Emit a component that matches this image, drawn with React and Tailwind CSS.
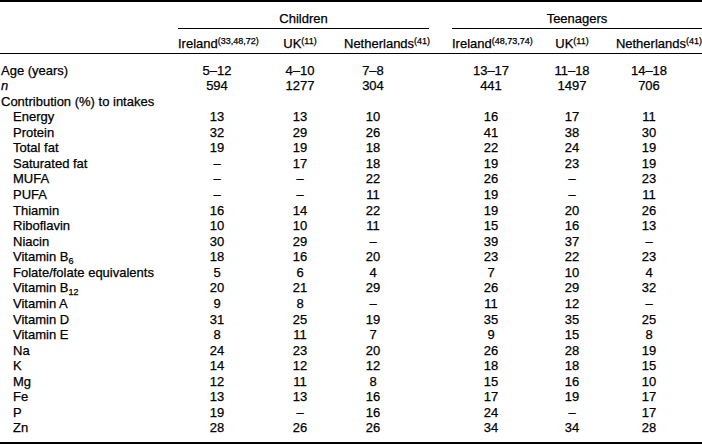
import React from "react";

const D = "–";

const rows = [
  { label: "Age (years)", vals: ["5–12", "4–10", "7–8", "13–17", "11–18", "14–18"] },
  { label: <i>n</i>, vals: ["594", "1277", "304", "441", "1497", "706"] },
  { label: "Contribution (%) to intakes", vals: null },
  { label: "Energy", sub: true, vals: ["13", "13", "10", "16", "17", "11"] },
  { label: "Protein", sub: true, vals: ["32", "29", "26", "41", "38", "30"] },
  { label: "Total fat", sub: true, vals: ["19", "19", "18", "22", "24", "19"] },
  { label: "Saturated fat", sub: true, vals: [D, "17", "18", "19", "23", "19"] },
  { label: "MUFA", sub: true, vals: [D, D, "22", "26", D, "23"] },
  { label: "PUFA", sub: true, vals: [D, D, "11", "19", D, "11"] },
  { label: "Thiamin", sub: true, vals: ["16", "14", "22", "19", "20", "26"] },
  { label: "Riboflavin", sub: true, vals: ["10", "10", "11", "15", "16", "13"] },
  { label: "Niacin", sub: true, vals: ["30", "29", D, "39", "37", D] },
  {
    label: (
      <>
        Vitamin B<sub className="text-[9px]">6</sub>
      </>
    ),
    sub: true,
    vals: ["18", "16", "20", "23", "22", "23"],
  },
  { label: "Folate/folate equivalents", sub: true, vals: ["5", "6", "4", "7", "10", "4"] },
  {
    label: (
      <>
        Vitamin B<sub className="text-[9px]">12</sub>
      </>
    ),
    sub: true,
    vals: ["20", "21", "29", "26", "29", "32"],
  },
  { label: "Vitamin A", sub: true, vals: ["9", "8", D, "11", "12", D] },
  { label: "Vitamin D", sub: true, vals: ["31", "25", "19", "35", "35", "25"] },
  { label: "Vitamin E", sub: true, vals: ["8", "11", "7", "9", "15", "8"] },
  { label: "Na", sub: true, vals: ["24", "23", "20", "26", "28", "19"] },
  { label: "K", sub: true, vals: ["14", "12", "12", "18", "18", "15"] },
  { label: "Mg", sub: true, vals: ["12", "11", "8", "15", "16", "10"] },
  { label: "Fe", sub: true, vals: ["13", "13", "16", "17", "19", "17"] },
  { label: "P", sub: true, vals: ["19", D, "16", "24", D, "17"] },
  { label: "Zn", sub: true, vals: ["28", "26", "26", "34", "34", "28"] },
];

// value columns; the empty gap column sits between the third and fourth
const valClass = [
  "text-center",
  "text-center",
  "text-center pr-[27px]",
  "text-center",
  "text-center",
  "text-center pr-[18px]",
];

const Sup = ({ children }) => <sup className="text-[9px]">{children}</sup>;

export default function App() {
  return (
    <div
      className="w-[702px] h-[445px] bg-white text-black text-[13px] [-webkit-text-stroke:0.25px_black]"
      style={{ fontFamily: '"Liberation Sans", Arial, sans-serif' }}
    >
      <div className="border-t-2 border-b-2 border-black pb-[6px]">
        {/* Group header */}
        <div className="grid grid-cols-[178px_251px_23px_250px] leading-[15px]">
          <div />
          <div className="text-center pt-[9px] pb-[2px] border-b border-black">Children</div>
          <div />
          <div className="text-center pt-[9px] pb-[2px] border-b border-black">Teenagers</div>
        </div>

        {/* Country header */}
        <div className="grid grid-cols-[178px_78px_88px_85px_23px_78px_84px_88px] leading-[15px] border-b border-black whitespace-nowrap">
          <div />
          <div className="text-center pt-[7px] pb-[2px]">
            Ireland<Sup>(33,48,72)</Sup>
          </div>
          <div className="text-center pt-[7px] pb-[2px]">
            UK<Sup>(11)</Sup>
          </div>
          <div className="text-center pt-[7px] pb-[2px]">
            Netherlands<Sup>(41)</Sup>
          </div>
          <div />
          <div className="text-center pt-[7px] pb-[2px]">
            Ireland<Sup>(48,73,74)</Sup>
          </div>
          <div className="text-center pt-[7px] pb-[2px]">
            UK<Sup>(11)</Sup>
          </div>
          <div className="text-right pt-[7px] pb-[2px]">
            Netherlands<Sup>(41)</Sup>
          </div>
        </div>

        {/* Body */}
        <div className="pt-[8.5px]">
          {rows.map((r, i) => (
            <div
              key={i}
              className="grid grid-cols-[178px_78px_88px_85px_23px_78px_84px_88px] leading-[15.57px] h-[15.57px] whitespace-nowrap"
            >
              <div className={r.sub ? "pl-[13px]" : "pl-px"}>{r.label}</div>
              {r.vals ? (
                <>
                  <div className={valClass[0]}>{r.vals[0]}</div>
                  <div className={valClass[1]}>{r.vals[1]}</div>
                  <div className={valClass[2]}>{r.vals[2]}</div>
                  <div />
                  <div className={valClass[3]}>{r.vals[3]}</div>
                  <div className={valClass[4]}>{r.vals[4]}</div>
                  <div className={valClass[5]}>{r.vals[5]}</div>
                </>
              ) : null}
            </div>
          ))}
        </div>
      </div>
    </div>
  );
}
